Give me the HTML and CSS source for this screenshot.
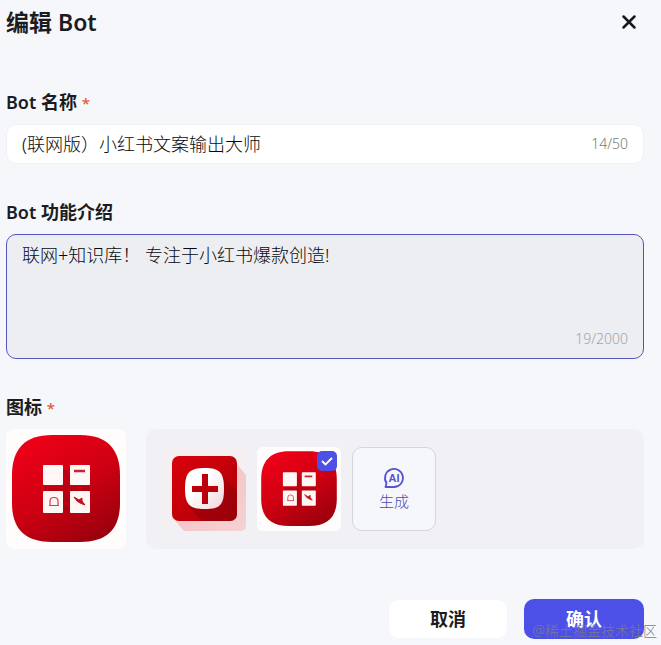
FILE: index.html
```html
<!DOCTYPE html>
<html lang="zh-CN">
<head>
<meta charset="utf-8">
<meta name="viewport" content="width=device-width, initial-scale=1">
<title>编辑 Bot</title>
<link rel="stylesheet" href="styles.css">
</head>
<body>
<form class="dialog">
  <header class="header">
    <h1 class="title">编辑 Bot</h1>
    <button class="close" type="button" aria-label="关闭">
      <svg width="16" height="16" viewBox="0 0 16 16"><path d="M2.500 2.500 13.500 13.500M13.500 2.500 2.500 13.500" stroke="#17181e" stroke-width="2.500" stroke-linecap="round"/></svg>
    </button>
  </header>

  <div class="field">
    <label class="label" for="name">Bot 名称 <span class="required">*</span></label>
    <div class="control control-name">
      <input class="input" id="name" type="text" value="(联网版）小红书文案输出大师">
      <span class="count">14/50</span>
    </div>
  </div>

  <div class="field">
    <label class="label" for="intro">Bot 功能介绍</label>
    <div class="control control-intro">
      <textarea class="input textarea" id="intro">联网+知识库！ 专注于小红书爆款创造!</textarea>
      <span class="count count-muted">19/2000</span>
    </div>
  </div>

  <div class="field">
    <div class="label">图标 <span class="required">*</span></div>
    <div class="icons">
      <svg class="preview" viewBox="0 0 120 120" role="img" aria-label="当前图标">
        <defs>
          <linearGradient id="red" x1="0.2" y1="0" x2="0.8" y2="1">
            <stop offset="0" stop-color="#ef0018"/>
            <stop offset="0.5" stop-color="#cf0012"/>
            <stop offset="1" stop-color="#98000d"/>
          </linearGradient>
          <symbol id="app" viewBox="0 0 120 120">
            <rect width="120" height="120" rx="8" fill="#fffdfc"/>
            <path d="M46 6H74C101 6 114 20 114 46V74C114 100 101 113 74 113H46C19 113 6 100 6 74V46C6 20 19 6 46 6Z" fill="url(#red)"/>
            <path d="M38 57H84V63H38ZM57 41H64V82H57Z" fill="#900010" opacity=".3"/>
            <g fill="#fff7f6">
              <rect x="37" y="36" width="20" height="20" rx="1"/>
              <rect x="64" y="36" width="20" height="20" rx="1"/>
              <rect x="37" y="62" width="20" height="22" rx="1"/>
              <rect x="64" y="62" width="20" height="22" rx="1"/>
            </g>
            <path d="M68 42H79" stroke="#d2202e" stroke-width="2.500"/>
            <path d="M44 76V72Q44 68.500 48 68.500Q52 68.500 52 72V76M43 76.500H53" fill="none" stroke="#cf4048" stroke-width="1.200"/>
            <path d="M68 68 73 71 76 69 76 72 79 76 74 74 71 72Z" fill="#c5101d" stroke="#c5101d"/>
          </symbol>
        </defs>
        <use href="#app"/>
      </svg>

      <div class="tray">
        <button class="tile" type="button" aria-label="图标一">
          <svg class="art" viewBox="0 0 84 84">
            <defs>
              <linearGradient id="plusred" x1="0" y1="0" x2="1" y2="1"><stop offset="0" stop-color="#d9020d"/><stop offset=".55" stop-color="#c10009"/><stop offset="1" stop-color="#a50009"/></linearGradient>
              <linearGradient id="shade" x1="0" y1="0" x2="1" y2="1"><stop offset="0" stop-color="#f4bdbf"/><stop offset="1" stop-color="#f4d2d4"/></linearGradient>
              <linearGradient id="cushion" x1="0" y1="0" x2="1" y2="1"><stop offset="0.4" stop-color="#fff"/><stop offset="1" stop-color="#f0d5d8"/></linearGradient>
            </defs>
            <rect width="84" height="84" rx="8" fill="#f4f0f2"/>
            <path d="M74 16 84 28V78Q84 84 78 84H22L10 70Z" fill="url(#shade)"/>
            <rect x="10" y="9" width="65" height="65" rx="7" fill="url(#plusred)"/>
            <path d="M60 29 75 44V67Q75 74 68 74H40L27 60Z" fill="#8d0009" opacity=".5"/>
            <path d="M43 21C58 21 62 26 62 42S58 62 43 62 23 58 23 42 27 21 43 21Z" fill="url(#cushion)"/>
            <path d="M43 27V57M30 42H56" stroke="#bb000c" stroke-width="6"/>
          </svg>
        </button>
        <button class="tile" type="button" aria-label="图标二" aria-pressed="true">
          <svg class="art" viewBox="0 0 120 120"><use href="#app"/></svg>
          <span class="check"><svg width="20" height="20" viewBox="0 0 20 20"><path d="m5 10 3.500 3.500L15 7" fill="none" stroke="#fff" stroke-width="1.800"/></svg></span>
        </button>
        <button class="tile generate" type="button">
          <svg width="22" height="22" viewBox="0 0 22 22">
            <path d="M2.500 20H11A9 9 0 1 0 3.500 16Z" fill="none" stroke="#5852d6" stroke-width="1.800" stroke-linejoin="round"/>
            <text class="ai" x="11" y="15" text-anchor="middle">AI</text>
          </svg>
          <span>生成</span>
        </button>
      </div>
    </div>
  </div>

  <footer class="actions">
    <button class="button cancel" type="button">取消</button>
    <button class="button confirm" type="submit">确认</button>
  </footer>
  <div class="watermark">@稀土掘金技术社区</div>
</form>
</body>
</html>
```

FILE: styles.css
```css
* { box-sizing: border-box; }

body {
  margin: 0;
  background: #f6f7fb;
  color: #1b1c22;
  font-family: "Noto Sans", "Noto Sans CJK SC", sans-serif;
  font-size: 18px;
  line-height: 24px;
}

button, input, textarea {
  font: inherit;
  color: inherit;
}

button {
  border: 0;
  padding: 0;
  cursor: pointer;
}

.dialog {
  position: relative;
  padding: 7px 17px 6px 6px;
}

.header {
  display: flex;
  justify-content: space-between;
  align-items: center;
  margin-bottom: 53px;
}

.title {
  margin: 0;
  font-size: 23px;
  line-height: 30px;
  font-weight: 600;
}

.close {
  display: flex;
  padding: 7px;
  background: transparent;
}

.field { margin-bottom: 36px; }

.label {
  display: block;
  margin-bottom: 10px;
  font-weight: 600;
}

.required {
  color: #dc4c32;
  font-size: 15px;
  line-height: 1;
  font-weight: 400;
}

.control {
  position: relative;
  display: flex;
  border-radius: 10px;
}

.control-name {
  height: 40px;
  align-items: center;
  padding: 0 15px;
  border: 1px solid #eff0f4;
  background: #fff;
}

.control-intro {
  height: 125px;
  border: 1px solid #5654bd;
  background: #edeef2;
}

.input {
  flex: 1;
  min-width: 0;
  padding: 0;
  border: 0;
  outline: 0;
  background: transparent;
  color: #08090d;
  font-weight: 300;
}

.textarea {
  padding: 8px 15px;
  resize: none;
}

.count {
  color: #77787d;
  font-size: 14px;
  font-weight: 300;
}

.count-muted {
  position: absolute;
  right: 15px;
  bottom: 7px;
  color: #a2a3a9;
}

.icons {
  display: flex;
  gap: 20px;
}

.preview {
  width: 120px;
  height: 120px;
  flex: none;
}

.tray {
  flex: 1;
  display: flex;
  align-items: center;
  gap: 11px;
  padding: 0 16px;
  border-radius: 10px;
  background: #f0f0f5;
}

.tile {
  position: relative;
  width: 84px;
  height: 84px;
  flex: none;
  border-radius: 10px;
  background: transparent;
}

.art {
  display: block;
  width: 100%;
  height: 100%;
}

.check {
  position: absolute;
  top: 4px;
  right: 4px;
  width: 20px;
  height: 20px;
  border-radius: 5px;
  background: #4d50e6;
}

.check svg { display: block; }

.generate {
  display: flex;
  flex-direction: column;
  align-items: center;
  justify-content: center;
  gap: 1px;
  border: 1px solid #d4d5dd;
  background: #f6f7fb;
  color: #4b47b5;
  font-size: 15px;
  line-height: 22px;
  font-weight: 300;
}

.ai {
  fill: #5852d6;
  font-family: "Liberation Sans", sans-serif;
  font-size: 11px;
  font-weight: 700;
}

.actions {
  display: flex;
  justify-content: flex-end;
  gap: 16px;
  margin-top: 50px;
}

.button {
  width: 120px;
  height: 40px;
  border-radius: 10px;
  font-weight: 700;
}

.cancel {
  border: 1px solid #f6f7fb;
  background: #fff;
}

.confirm {
  background: #4d50e6;
  color: #fff;
}

.watermark {
  position: absolute;
  right: 4px;
  bottom: 4px;
  color: #777a94;
  font-size: 14px;
  line-height: 20px;
  font-weight: 300;
  pointer-events: none;
}
```
